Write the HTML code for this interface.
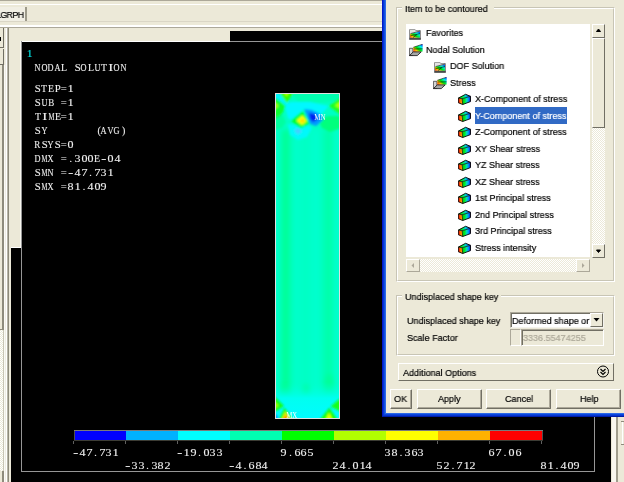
<!DOCTYPE html>
<html><head><meta charset="utf-8">
<style>
*{margin:0;padding:0;box-sizing:border-box}
html,body{width:624px;height:482px;overflow:hidden;background:#ECE9D8;position:relative;font-family:"Liberation Sans",sans-serif}
.a{position:absolute}
.m{position:absolute;will-change:transform;font-family:"Liberation Mono",monospace;font-size:11px;line-height:11px;color:#E8E8E8;white-space:pre}
.t{position:absolute;will-change:transform;-webkit-text-stroke:0.2px currentColor;font-size:9.5px;line-height:9px;color:#000;white-space:pre;transform:scaleX(0.95);transform-origin:0 0}
.s{position:absolute;will-change:transform;font-family:"Liberation Serif",serif;font-size:10px;line-height:11px;color:#F0F0F0;-webkit-text-stroke:0.1px currentColor}
.s i{position:absolute;width:20px;text-align:center;font-style:normal;white-space:pre}
.s b{font-weight:normal}
</style></head><body>
<!-- top toolbar lines -->
<div class="a" style="left:0;top:0;width:624px;height:1px;background:#ACA899"></div>
<div class="a" style="left:0;top:4px;width:624px;height:1px;background:#FFFFFF"></div>
<div class="a" style="left:0;top:21px;width:624px;height:1px;background:#DAD6C6"></div>
<div class="a" style="left:0;top:25px;width:624px;height:2px;background:#FFFFFF"></div>
<div class="a" style="left:0;top:27px;width:624px;height:1px;background:#ACA899"></div>
<!-- tab -->
<div class="a" style="left:0;top:7px;width:25px;height:14px;background:#F1EFE4"></div>
<div class="a" style="left:25px;top:7px;width:2px;height:14px;background:#9D9A8A"></div>
<div class="t" style="left:-4px;top:10px;font-size:9.5px;color:#000;letter-spacing:-0.8px">LGRPH</div>

<!-- black graphics window -->
<div class="a" style="left:11px;top:31px;width:600px;height:451px;background:#000"></div>
<!-- beige overlay panels -->
<div class="a" style="left:0;top:28px;width:230px;height:13px;background:#ECE9D8"></div>
<div class="a" style="left:0;top:28px;width:21px;height:220px;background:#ECE9D8"></div>
<div class="a" style="left:22px;top:41px;width:208px;height:1px;background:#FFFFFF"></div>
<div class="a" style="left:20px;top:41px;width:1px;height:207px;background:#F8F7F0"></div>
<div class="a" style="left:11px;top:247px;width:10px;height:1px;background:#FFFFFF"></div>
<!-- left strip -->
<div class="a" style="left:2px;top:65px;width:2px;height:265px;background:#8E8B7C"></div>
<div class="a" style="left:0;top:329px;width:3px;height:1px;background:#8E8B7C"></div>
<div class="a" style="left:0;top:330px;width:4px;height:141px;background:#F4F3EE;background-image:repeating-conic-gradient(#FFFFFF 0 25%,#ECE9D8 0 50%);background-size:2px 2px"></div>
<div class="a" style="left:3px;top:330px;width:1px;height:141px;background:#C8C5B5"></div>
<div class="a" style="left:0;top:471px;width:2px;height:11px;background:#ECE9D8"></div>
<div class="a" style="left:2px;top:471px;width:2px;height:11px;background:#8E8B7C"></div>
<div class="a" style="left:4px;top:65px;width:1px;height:417px;background:#FBFAF5"></div>
<div class="a" style="left:5px;top:28px;width:1px;height:454px;background:#F0EEE4"></div>
<div class="a" style="left:6px;top:28px;width:1px;height:454px;background:#FFFFFF"></div>
<div class="a" style="left:7px;top:28px;width:1px;height:454px;background:#B8B5A6"></div>
<div class="a" style="left:8px;top:28px;width:1px;height:454px;background:#8E8B7C"></div>
<div class="a" style="left:0;top:28px;width:4px;height:20px;background:#ECE9D8;border-right:1px solid #716F64;border-bottom:1px solid #716F64"></div>
<div class="a" style="left:0;top:49px;width:4px;height:16px;background:#ECE9D8;border-right:1px solid #716F64;border-bottom:1px solid #716F64"></div>
<div class="a" style="left:0;top:37px;width:1px;height:4px;background:#000"></div>

<!-- frame lines -->
<div class="a" style="left:21px;top:41px;width:1px;height:431px;background:#969696"></div>
<div class="a" style="left:21px;top:471px;width:574px;height:1px;background:#969696"></div>
<div class="a" style="left:594px;top:41px;width:1px;height:431px;background:#969696"></div>
<div class="a" style="left:230px;top:41px;width:365px;height:1px;background:#969696"></div>

<!-- right lower strip -->
<div class="a" style="left:611px;top:417px;width:13px;height:65px;background:#ECE9D8"></div>
<div class="a" style="left:612px;top:417px;width:4px;height:65px;background:#F8F6EE"></div>
<div class="a" style="left:616px;top:417px;width:2px;height:65px;background:#A09D8D"></div>
<div class="a" style="left:621px;top:421px;width:3px;height:1px;background:#8E8B7C"></div>
<div class="a" style="left:621px;top:444px;width:3px;height:1px;background:#8E8B7C"></div>
<div class="a" style="left:622px;top:422px;width:1px;height:22px;background:#FFFFFF"></div>

<!-- ANSYS text -->
<div class="s" style="left:0;top:0;color:#00E0E0"><i style="left:19.8px;top:48px"><b style="display:inline-block;transform:scaleX(1.25)">1</b></i></div>
<div class="s" style="left:0;top:0"><i style="left:27.8px;top:62px"><b style="display:inline-block;transform:scaleX(0.83)">N</b></i><i style="left:34.4px;top:62px"><b style="display:inline-block;transform:scaleX(0.83)">O</b></i><i style="left:41.0px;top:62px"><b style="display:inline-block;transform:scaleX(0.83)">D</b></i><i style="left:47.6px;top:62px"><b style="display:inline-block;transform:scaleX(0.83)">A</b></i><i style="left:54.2px;top:62px"><b style="display:inline-block;transform:scaleX(0.98)">L</b></i><i style="left:67.4px;top:62px"><b style="display:inline-block;transform:scaleX(1.08)">S</b></i><i style="left:74.0px;top:62px"><b style="display:inline-block;transform:scaleX(0.83)">O</b></i><i style="left:80.6px;top:62px"><b style="display:inline-block;transform:scaleX(0.98)">L</b></i><i style="left:87.2px;top:62px"><b style="display:inline-block;transform:scaleX(0.83)">U</b></i><i style="left:93.8px;top:62px"><b style="display:inline-block;transform:scaleX(0.98)">T</b></i><i style="left:100.4px;top:62px"><b style="display:inline-block;transform:scaleX(1.5)">I</b></i><i style="left:107.0px;top:62px"><b style="display:inline-block;transform:scaleX(0.83)">O</b></i><i style="left:113.6px;top:62px"><b style="display:inline-block;transform:scaleX(0.83)">N</b></i></div>
<div class="s" style="left:0;top:0"><i style="left:27.8px;top:83px"><b style="display:inline-block;transform:scaleX(1.08)">S</b></i><i style="left:34.4px;top:83px"><b style="display:inline-block;transform:scaleX(0.98)">T</b></i><i style="left:41.0px;top:83px"><b style="display:inline-block;transform:scaleX(0.98)">E</b></i><i style="left:47.6px;top:83px"><b style="display:inline-block;transform:scaleX(1.08)">P</b></i><i style="left:54.2px;top:83px"><b style="display:inline-block;transform:scaleX(1.06)">=</b></i><i style="left:60.8px;top:83px"><b style="display:inline-block;transform:scaleX(1.25)">1</b></i></div>
<div class="s" style="left:0;top:0"><i style="left:27.8px;top:97px"><b style="display:inline-block;transform:scaleX(1.08)">S</b></i><i style="left:34.4px;top:97px"><b style="display:inline-block;transform:scaleX(0.83)">U</b></i><i style="left:41.0px;top:97px"><b style="display:inline-block;transform:scaleX(0.90)">B</b></i><i style="left:54.2px;top:97px"><b style="display:inline-block;transform:scaleX(1.06)">=</b></i><i style="left:60.8px;top:97px"><b style="display:inline-block;transform:scaleX(1.25)">1</b></i></div>
<div class="s" style="left:0;top:0"><i style="left:27.8px;top:111px"><b style="display:inline-block;transform:scaleX(0.98)">T</b></i><i style="left:34.4px;top:111px"><b style="display:inline-block;transform:scaleX(1.5)">I</b></i><i style="left:41.0px;top:111px"><b style="display:inline-block;transform:scaleX(0.67)">M</b></i><i style="left:47.6px;top:111px"><b style="display:inline-block;transform:scaleX(0.98)">E</b></i><i style="left:54.2px;top:111px"><b style="display:inline-block;transform:scaleX(1.06)">=</b></i><i style="left:60.8px;top:111px"><b style="display:inline-block;transform:scaleX(1.25)">1</b></i></div>
<div class="s" style="left:0;top:0"><i style="left:27.8px;top:125px"><b style="display:inline-block;transform:scaleX(1.08)">S</b></i><i style="left:34.4px;top:125px"><b style="display:inline-block;transform:scaleX(0.83)">Y</b></i><i style="left:89.2px;top:125px"><b style="display:inline-block">(</b></i><i style="left:93.8px;top:125px"><b style="display:inline-block;transform:scaleX(0.83)">A</b></i><i style="left:100.4px;top:125px"><b style="display:inline-block;transform:scaleX(0.83)">V</b></i><i style="left:107.0px;top:125px"><b style="display:inline-block;transform:scaleX(0.83)">G</b></i><i style="left:113.6px;top:125px"><b style="display:inline-block">)</b></i></div>
<div class="s" style="left:0;top:0"><i style="left:27.8px;top:139px"><b style="display:inline-block;transform:scaleX(0.90)">R</b></i><i style="left:34.4px;top:139px"><b style="display:inline-block;transform:scaleX(1.08)">S</b></i><i style="left:41.0px;top:139px"><b style="display:inline-block;transform:scaleX(0.83)">Y</b></i><i style="left:47.6px;top:139px"><b style="display:inline-block;transform:scaleX(1.08)">S</b></i><i style="left:54.2px;top:139px"><b style="display:inline-block;transform:scaleX(1.06)">=</b></i><i style="left:60.8px;top:139px"><b style="display:inline-block;transform:scaleX(1.20)">0</b></i></div>
<div class="s" style="left:0;top:0"><i style="left:27.8px;top:153px"><b style="display:inline-block;transform:scaleX(0.83)">D</b></i><i style="left:34.4px;top:153px"><b style="display:inline-block;transform:scaleX(0.67)">M</b></i><i style="left:41.0px;top:153px"><b style="display:inline-block;transform:scaleX(0.83)">X</b></i><i style="left:54.2px;top:153px"><b style="display:inline-block;transform:scaleX(1.06)">=</b></i><i style="left:60.8px;top:153px"><b style="display:inline-block">.</b></i><i style="left:67.4px;top:153px"><b style="display:inline-block;transform:scaleX(1.20)">3</b></i><i style="left:74.0px;top:153px"><b style="display:inline-block;transform:scaleX(1.20)">0</b></i><i style="left:80.6px;top:153px"><b style="display:inline-block;transform:scaleX(1.20)">0</b></i><i style="left:87.2px;top:153px"><b style="display:inline-block;transform:scaleX(0.98)">E</b></i><i style="left:93.8px;top:153px"><b style="display:inline-block;transform:scaleX(1.50)">-</b></i><i style="left:100.4px;top:153px"><b style="display:inline-block;transform:scaleX(1.20)">0</b></i><i style="left:107.0px;top:153px"><b style="display:inline-block;transform:scaleX(1.20)">4</b></i></div>
<div class="s" style="left:0;top:0"><i style="left:27.8px;top:167px"><b style="display:inline-block;transform:scaleX(1.08)">S</b></i><i style="left:34.4px;top:167px"><b style="display:inline-block;transform:scaleX(0.67)">M</b></i><i style="left:41.0px;top:167px"><b style="display:inline-block;transform:scaleX(0.83)">N</b></i><i style="left:54.2px;top:167px"><b style="display:inline-block;transform:scaleX(1.06)">=</b></i><i style="left:60.8px;top:167px"><b style="display:inline-block;transform:scaleX(1.50)">-</b></i><i style="left:67.4px;top:167px"><b style="display:inline-block;transform:scaleX(1.20)">4</b></i><i style="left:74.0px;top:167px"><b style="display:inline-block;transform:scaleX(1.20)">7</b></i><i style="left:80.6px;top:167px"><b style="display:inline-block">.</b></i><i style="left:87.2px;top:167px"><b style="display:inline-block;transform:scaleX(1.20)">7</b></i><i style="left:93.8px;top:167px"><b style="display:inline-block;transform:scaleX(1.20)">3</b></i><i style="left:100.4px;top:167px"><b style="display:inline-block;transform:scaleX(1.25)">1</b></i></div>
<div class="s" style="left:0;top:0"><i style="left:27.8px;top:181px"><b style="display:inline-block;transform:scaleX(1.08)">S</b></i><i style="left:34.4px;top:181px"><b style="display:inline-block;transform:scaleX(0.67)">M</b></i><i style="left:41.0px;top:181px"><b style="display:inline-block;transform:scaleX(0.83)">X</b></i><i style="left:54.2px;top:181px"><b style="display:inline-block;transform:scaleX(1.06)">=</b></i><i style="left:60.8px;top:181px"><b style="display:inline-block;transform:scaleX(1.20)">8</b></i><i style="left:67.4px;top:181px"><b style="display:inline-block;transform:scaleX(1.25)">1</b></i><i style="left:74.0px;top:181px"><b style="display:inline-block">.</b></i><i style="left:80.6px;top:181px"><b style="display:inline-block;transform:scaleX(1.20)">4</b></i><i style="left:87.2px;top:181px"><b style="display:inline-block;transform:scaleX(1.20)">0</b></i><i style="left:93.8px;top:181px"><b style="display:inline-block;transform:scaleX(1.20)">9</b></i></div>

<!-- contour plot -->
<div class="a" style="left:275px;top:93px;width:65px;height:326px;background:#E0E0E0"></div>
<svg class="a" style="left:276px;top:94px" width="63" height="324" viewBox="0 0 63 324">
<defs>
<filter id="bl" x="-20%" y="-20%" width="140%" height="140%"><feGaussianBlur stdDeviation="1.1"/></filter>
<filter id="bl2" x="-50%" y="-10%" width="200%" height="120%"><feGaussianBlur stdDeviation="2.5"/></filter>
<clipPath id="cp"><rect x="0" y="0" width="63" height="324"/></clipPath>
<linearGradient id="vs" x1="0" y1="0" x2="63" y2="0" gradientUnits="userSpaceOnUse">
<stop offset="0" stop-color="#00FFE0"/><stop offset="0.145" stop-color="#00FF8C"/><stop offset="0.29" stop-color="#00FFCC"/><stop offset="0.48" stop-color="#00FFC4"/><stop offset="0.66" stop-color="#00FFD0"/><stop offset="0.84" stop-color="#00FFA4"/><stop offset="1" stop-color="#00FFDC"/></linearGradient>
<linearGradient id="bg1" x1="0" y1="288" x2="0" y2="324" gradientUnits="userSpaceOnUse"><stop offset="0" stop-color="#00FFD0" stop-opacity="0"/><stop offset="0.45" stop-color="#00FFF0"/><stop offset="1" stop-color="#00FCFF"/></linearGradient>
</defs>
<rect x="0" y="0" width="63" height="324" fill="#00FFC4"/>
<g clip-path="url(#cp)">
<rect x="0" y="36" width="63" height="268" fill="url(#vs)" filter="url(#bl2)"/>
<g filter="url(#bl2)">
<ellipse cx="9" cy="296" rx="4" ry="6" fill="#00FF80"/>
<ellipse cx="30" cy="297" rx="4" ry="6" fill="#00FF90"/>
<ellipse cx="53" cy="290" rx="4" ry="10" fill="#00FF98"/>
</g>
<rect x="-2" y="288" width="67" height="38" fill="url(#bg1)"/>
<g filter="url(#bl)">
<polygon points="15,-2 65,-2 65,7 40,9 22,8" fill="#00FFB0"/>
<polygon points="-2,-2 6,-2 10.5,9 16,8 34,8 52.7,12 44,22 36,17 28,15 26.5,17 15,26 12,24 10,16 4,8 -2,3" fill="#00F8FF"/>
<polygon points="12,30 20,31 25,34 33,31 36,34 31,43 22,46 14,41" fill="#00F8FF" opacity="0.9"/>
<polygon points="-2,3 5,8 9.6,12 7,18 3,24 -2,26" fill="#10FF30"/>
<polygon points="-2,24 6,20 10,28 6,34 -2,36" fill="#00FF90" opacity="0.7"/>
<polygon points="-2,8 2.5,11.8 -2,16" fill="#B0FF00"/>
<polygon points="3,-2 18,-2 10.5,9" fill="#30FF00"/>
<polygon points="8,-2 13,-2 10.5,2.5" fill="#C8FF00"/>
<polygon points="65,3 52.7,12 65,21" fill="#20FF20"/>
<polygon points="65,7.5 59,11.5 65,15" fill="#C0FF00"/>
<polygon points="42,26 52,22 65,22 65,34 54,38 46,34" fill="#00FF50" opacity="0.6"/>
<polygon points="15,26.5 26.5,17 33.4,29.8 25,34 18.4,30" fill="#00FF30"/>
<polygon points="20.5,26.6 26.5,21.5 31,27 26,31" fill="#FFFF00"/>
<polygon points="24.5,26.5 26.8,25 28.5,27 26.3,28.5" fill="#FFC800"/>
<polygon points="28,15 36,16 46,21 47,26 40,32 34,30 31,22" fill="#0098FF"/>
<polygon points="33,19 39,20 42,25 37,28 34,25" fill="#0020F0"/>
<polygon points="18,36.5 22,34 26,37 22,40.5" fill="#50C8FF" opacity="0.85"/>
<polygon points="-2,302 8,312 -2,318.5" fill="#18FF18"/>
<polygon points="-2,307.5 2.5,311.4 -2,315" fill="#A8FF00"/>
<polygon points="-2,318 2.5,324 -2,326" fill="#0090FF"/>
<polygon points="8.5,313.7 2.7,326 17.2,326" fill="#18FF10"/>
<polygon points="9.5,317.5 5.5,326 14,326" fill="#FFF000"/>
<polygon points="9.6,320.5 7.5,326 11.8,326" fill="#FF5000"/>
<polygon points="65,303.8 54.6,312.5 65,317.8" fill="#18FF18"/>
<polygon points="53.4,313.7 43.6,326 61.6,326" fill="#18FF10"/>
<polygon points="53,318.5 49.5,326 56.5,326" fill="#E8FF00"/>
</g>
</g>
<text x="38.2" y="25.8" font-family="Liberation Serif" font-size="9" fill="#fff" textLength="11.3" lengthAdjust="spacingAndGlyphs">MN</text>
<text x="10.2" y="324.2" font-family="Liberation Serif" font-size="9" fill="#fff" textLength="11" lengthAdjust="spacingAndGlyphs">MX</text>
</svg>

<!-- colorbar -->
<div class="a" style="left:74px;top:430px;width:469px;height:11px;background:#505050;border-top:1px solid #7A7A7A;border-bottom:1px solid #3C3C34"></div>
<div class="a" style="left:75px;top:431px;width:51px;height:9px;background:#0000FF"></div>
<div class="a" style="left:126px;top:431px;width:52px;height:9px;background:#00B2FF"></div>
<div class="a" style="left:178px;top:431px;width:52px;height:9px;background:#00FFFF"></div>
<div class="a" style="left:230px;top:431px;width:52px;height:9px;background:#00FFB2"></div>
<div class="a" style="left:282px;top:431px;width:52px;height:9px;background:#00FF00"></div>
<div class="a" style="left:334px;top:431px;width:52px;height:9px;background:#B2FF00"></div>
<div class="a" style="left:386px;top:431px;width:52px;height:9px;background:#FFFF00"></div>
<div class="a" style="left:438px;top:431px;width:52px;height:9px;background:#FFB200"></div>
<div class="a" style="left:490px;top:431px;width:52px;height:9px;background:#FF0000"></div>
<div class="a" style="left:73px;top:441px;width:1px;height:3px;background:#606060"></div><div class="a" style="left:125px;top:441px;width:1px;height:3px;background:#606060"></div><div class="a" style="left:177px;top:441px;width:1px;height:3px;background:#606060"></div><div class="a" style="left:229px;top:441px;width:1px;height:3px;background:#606060"></div><div class="a" style="left:281px;top:441px;width:1px;height:3px;background:#606060"></div><div class="a" style="left:333px;top:441px;width:1px;height:3px;background:#606060"></div><div class="a" style="left:385px;top:441px;width:1px;height:3px;background:#606060"></div><div class="a" style="left:437px;top:441px;width:1px;height:3px;background:#606060"></div><div class="a" style="left:489px;top:441px;width:1px;height:3px;background:#606060"></div><div class="a" style="left:541px;top:441px;width:1px;height:3px;background:#606060"></div>
<div class="s" style="left:0;top:0"><i style="left:65.8px;top:447px"><b style="display:inline-block;transform:scaleX(1.50)">-</b></i><i style="left:72.4px;top:447px"><b style="display:inline-block;transform:scaleX(1.20)">4</b></i><i style="left:79.0px;top:447px"><b style="display:inline-block;transform:scaleX(1.20)">7</b></i><i style="left:85.6px;top:447px"><b style="display:inline-block">.</b></i><i style="left:92.2px;top:447px"><b style="display:inline-block;transform:scaleX(1.20)">7</b></i><i style="left:98.8px;top:447px"><b style="display:inline-block;transform:scaleX(1.20)">3</b></i><i style="left:105.4px;top:447px"><b style="display:inline-block;transform:scaleX(1.25)">1</b></i></div>
<div class="s" style="left:0;top:0"><i style="left:117.8px;top:460px"><b style="display:inline-block;transform:scaleX(1.50)">-</b></i><i style="left:124.4px;top:460px"><b style="display:inline-block;transform:scaleX(1.20)">3</b></i><i style="left:131.0px;top:460px"><b style="display:inline-block;transform:scaleX(1.20)">3</b></i><i style="left:137.6px;top:460px"><b style="display:inline-block">.</b></i><i style="left:144.2px;top:460px"><b style="display:inline-block;transform:scaleX(1.20)">3</b></i><i style="left:150.8px;top:460px"><b style="display:inline-block;transform:scaleX(1.20)">8</b></i><i style="left:157.4px;top:460px"><b style="display:inline-block;transform:scaleX(1.20)">2</b></i></div>
<div class="s" style="left:0;top:0"><i style="left:169.8px;top:447px"><b style="display:inline-block;transform:scaleX(1.50)">-</b></i><i style="left:176.4px;top:447px"><b style="display:inline-block;transform:scaleX(1.25)">1</b></i><i style="left:183.0px;top:447px"><b style="display:inline-block;transform:scaleX(1.20)">9</b></i><i style="left:189.6px;top:447px"><b style="display:inline-block">.</b></i><i style="left:196.2px;top:447px"><b style="display:inline-block;transform:scaleX(1.20)">0</b></i><i style="left:202.8px;top:447px"><b style="display:inline-block;transform:scaleX(1.20)">3</b></i><i style="left:209.4px;top:447px"><b style="display:inline-block;transform:scaleX(1.20)">3</b></i></div>
<div class="s" style="left:0;top:0"><i style="left:221.8px;top:460px"><b style="display:inline-block;transform:scaleX(1.50)">-</b></i><i style="left:228.4px;top:460px"><b style="display:inline-block;transform:scaleX(1.20)">4</b></i><i style="left:235.0px;top:460px"><b style="display:inline-block">.</b></i><i style="left:241.6px;top:460px"><b style="display:inline-block;transform:scaleX(1.20)">6</b></i><i style="left:248.2px;top:460px"><b style="display:inline-block;transform:scaleX(1.20)">8</b></i><i style="left:254.8px;top:460px"><b style="display:inline-block;transform:scaleX(1.20)">4</b></i></div>
<div class="s" style="left:0;top:0"><i style="left:273.8px;top:447px"><b style="display:inline-block;transform:scaleX(1.20)">9</b></i><i style="left:280.4px;top:447px"><b style="display:inline-block">.</b></i><i style="left:287.0px;top:447px"><b style="display:inline-block;transform:scaleX(1.20)">6</b></i><i style="left:293.6px;top:447px"><b style="display:inline-block;transform:scaleX(1.20)">6</b></i><i style="left:300.2px;top:447px"><b style="display:inline-block;transform:scaleX(1.20)">5</b></i></div>
<div class="s" style="left:0;top:0"><i style="left:325.8px;top:460px"><b style="display:inline-block;transform:scaleX(1.20)">2</b></i><i style="left:332.4px;top:460px"><b style="display:inline-block;transform:scaleX(1.20)">4</b></i><i style="left:339.0px;top:460px"><b style="display:inline-block">.</b></i><i style="left:345.6px;top:460px"><b style="display:inline-block;transform:scaleX(1.20)">0</b></i><i style="left:352.2px;top:460px"><b style="display:inline-block;transform:scaleX(1.25)">1</b></i><i style="left:358.8px;top:460px"><b style="display:inline-block;transform:scaleX(1.20)">4</b></i></div>
<div class="s" style="left:0;top:0"><i style="left:377.8px;top:447px"><b style="display:inline-block;transform:scaleX(1.20)">3</b></i><i style="left:384.4px;top:447px"><b style="display:inline-block;transform:scaleX(1.20)">8</b></i><i style="left:391.0px;top:447px"><b style="display:inline-block">.</b></i><i style="left:397.6px;top:447px"><b style="display:inline-block;transform:scaleX(1.20)">3</b></i><i style="left:404.2px;top:447px"><b style="display:inline-block;transform:scaleX(1.20)">6</b></i><i style="left:410.8px;top:447px"><b style="display:inline-block;transform:scaleX(1.20)">3</b></i></div>
<div class="s" style="left:0;top:0"><i style="left:429.8px;top:460px"><b style="display:inline-block;transform:scaleX(1.20)">5</b></i><i style="left:436.4px;top:460px"><b style="display:inline-block;transform:scaleX(1.20)">2</b></i><i style="left:443.0px;top:460px"><b style="display:inline-block">.</b></i><i style="left:449.6px;top:460px"><b style="display:inline-block;transform:scaleX(1.20)">7</b></i><i style="left:456.2px;top:460px"><b style="display:inline-block;transform:scaleX(1.25)">1</b></i><i style="left:462.8px;top:460px"><b style="display:inline-block;transform:scaleX(1.20)">2</b></i></div>
<div class="s" style="left:0;top:0"><i style="left:481.8px;top:447px"><b style="display:inline-block;transform:scaleX(1.20)">6</b></i><i style="left:488.4px;top:447px"><b style="display:inline-block;transform:scaleX(1.20)">7</b></i><i style="left:495.0px;top:447px"><b style="display:inline-block">.</b></i><i style="left:501.6px;top:447px"><b style="display:inline-block;transform:scaleX(1.20)">0</b></i><i style="left:508.2px;top:447px"><b style="display:inline-block;transform:scaleX(1.20)">6</b></i></div>
<div class="s" style="left:0;top:0"><i style="left:533.8px;top:460px"><b style="display:inline-block;transform:scaleX(1.20)">8</b></i><i style="left:540.4px;top:460px"><b style="display:inline-block;transform:scaleX(1.25)">1</b></i><i style="left:547.0px;top:460px"><b style="display:inline-block">.</b></i><i style="left:553.6px;top:460px"><b style="display:inline-block;transform:scaleX(1.20)">4</b></i><i style="left:560.2px;top:460px"><b style="display:inline-block;transform:scaleX(1.20)">0</b></i><i style="left:566.8px;top:460px"><b style="display:inline-block;transform:scaleX(1.20)">9</b></i></div>

<svg width="0" height="0" style="position:absolute"><defs>
<linearGradient id="rbf" x1="0" y1="1" x2="1" y2="0"><stop offset="0" stop-color="#FF2000"/><stop offset="0.22" stop-color="#FFC000"/><stop offset="0.42" stop-color="#00E000"/><stop offset="0.7" stop-color="#00F0E0"/><stop offset="1" stop-color="#0010FF"/></linearGradient>
<linearGradient id="rbo" x1="0" y1="1" x2="1" y2="0"><stop offset="0" stop-color="#FF2000"/><stop offset="0.25" stop-color="#FFC000"/><stop offset="0.45" stop-color="#00E000"/><stop offset="0.75" stop-color="#00F0F0"/><stop offset="1" stop-color="#0000FF"/></linearGradient>
<linearGradient id="cfr" x1="0" y1="0" x2="1" y2="0"><stop offset="0" stop-color="#E80000"/><stop offset="0.5" stop-color="#FF7000"/><stop offset="1" stop-color="#FFD800"/></linearGradient>
<linearGradient id="csd" x1="0" y1="0" x2="1" y2="0"><stop offset="0" stop-color="#00C000"/><stop offset="0.3" stop-color="#00E820"/><stop offset="0.55" stop-color="#00E0C0"/><stop offset="0.78" stop-color="#0088FF"/><stop offset="1" stop-color="#1000D0"/></linearGradient>
<g id="ic_fold"><path d="M0.5,10.5 V0.8 Q0.5,0.3 1,0.3 H5.8 L6.8,1.6 H11.5 V10.5 Z" fill="#E4E4E4" stroke="#858585" stroke-width="0.9"/><polygon points="1,5.1 11,2.4 11,8.8 1,8.8" fill="url(#rbf)"/><path d="M1.5,4.6 L11,2 M1.3,6.8 L11,4.6 M4,8.6 L8,5.5" stroke="#000" stroke-width="0.7" opacity="0.8"/><rect x="0.5" y="8.8" width="11.2" height="1.8" fill="#4A4A4A"/></g>
<g id="ic_open"><polygon points="0.4,4.3 3.9,4.3 3.9,11.4 0.4,11.4" fill="#D4D4D4" stroke="#404040" stroke-width="0.8"/><polygon points="4.3,3.3 13.6,0.2 13.6,7.6 4.3,7.8" fill="url(#rbo)"/><path d="M4.3,3.3 L13.6,0.2 M4.5,5 L13.6,4.8" stroke="#000" stroke-width="0.7" opacity="0.8"/><polygon points="0.4,11.6 4.3,7.9 12.2,7.9 8.3,11.6" fill="#A6A6A6" stroke="#101010" stroke-width="0.8"/></g>
<g id="ic_cube"><polygon points="0.3,5.1 4.1,5.7 4.7,11.5 0.3,9.7" fill="url(#cfr)"/><polygon points="0.3,5.1 7.6,1.3 12.5,3.3 4.1,5.7" fill="url(#csd)"/><polygon points="4.1,5.7 12.5,3.3 12.5,8.6 4.7,11.5" fill="url(#csd)"/><polygon points="0.3,5.1 7.6,1.3 12.5,3.3 12.5,8.6 4.7,11.5 0.3,9.7" fill="none" stroke="#000" stroke-width="0.9" stroke-linejoin="round"/><path d="M0.3,5.1 L4.1,5.7 L12.5,3.3 M4.1,5.7 L4.7,11.5" fill="none" stroke="#000" stroke-width="0.7"/></g>
</defs></svg>
<!-- DIALOG -->
<div class="a" style="left:382px;top:0;width:242px;height:417px;background:#ECE9D8"></div>
<div class="a" style="left:382px;top:0;width:1px;height:417px;background:#0018C8"></div>
<div class="a" style="left:383px;top:0;width:1px;height:416px;background:#0535D8"></div>
<div class="a" style="left:384px;top:0;width:1px;height:415px;background:#1050E0"></div>
<div class="a" style="left:385px;top:0;width:1px;height:414px;background:#2C68E8"></div>
<div class="a" style="left:385px;top:413px;width:239px;height:1px;background:#2C68E8"></div>
<div class="a" style="left:384px;top:414px;width:240px;height:1px;background:#0A46DD"></div>
<div class="a" style="left:383px;top:415px;width:241px;height:1px;background:#0535D0"></div>
<div class="a" style="left:382px;top:416px;width:242px;height:1px;background:#001CA8"></div>

<!-- group 1 -->
<div class="a" style="left:396px;top:7px;width:219px;height:275px;border:1px solid #C8C5B5;border-right-color:#FFFFFF;border-bottom-color:#FFFFFF"></div>
<div class="a" style="left:397px;top:8px;width:217px;height:273px;border:1px solid #FFFFFF;border-right-color:#C8C5B5;border-bottom-color:#C8C5B5"></div>
<div class="a" style="left:402px;top:2px;width:92px;height:12px;background:#ECE9D8"></div>
<div class="t" style="left:405px;top:4px">Item to be contoured</div>

<!-- list -->
<div class="a" style="left:406px;top:24px;width:184px;height:233px;background:#FFFFFF"></div>
<div class="a" style="left:475px;top:107px;width:92px;height:17px;background:#316AC5"></div>

<!-- v scrollbar -->
<div class="a" style="left:592px;top:24px;width:13px;height:233px;background:#F4F3EE;background-image:repeating-conic-gradient(#FFFFFF 0 25%,#ECE9D8 0 50%);background-size:2px 2px"></div>
<div class="a" style="left:592px;top:24px;width:13px;height:14px;background:#ECE9D8;border-left:1px solid #FFF;border-top:1px solid #FFF;border-right:1px solid #716F64;border-bottom:1px solid #716F64"></div>
<div class="a" style="left:592px;top:38px;width:13px;height:90px;background:#ECE9D8;border-left:1px solid #FFF;border-top:1px solid #FFF;border-right:1px solid #716F64;border-bottom:1px solid #716F64"></div>
<div class="a" style="left:592px;top:244px;width:13px;height:14px;background:#ECE9D8;border-left:1px solid #FFF;border-top:1px solid #FFF;border-right:1px solid #716F64;border-bottom:1px solid #716F64"></div>
<svg class="a" style="left:592px;top:24px" width="13" height="234"><polygon points="4.5,7.5 6.5,5 8.5,7.5" fill="#000" stroke="#000" stroke-width="1"/><polygon points="4.5,226 6.5,228.5 8.5,226" fill="#000" stroke="#000" stroke-width="1"/></svg>

<!-- h scrollbar -->
<div class="a" style="left:406px;top:259px;width:184px;height:13px;background:#F4F3EE;background-image:repeating-conic-gradient(#FFFFFF 0 25%,#ECE9D8 0 50%);background-size:2px 2px"></div>
<div class="a" style="left:406px;top:259px;width:14px;height:13px;background:#ECE9D8;border-left:1px solid #FFF;border-top:1px solid #FFF;border-right:1px solid #ACA899;border-bottom:1px solid #ACA899"></div>
<div class="a" style="left:576px;top:259px;width:14px;height:13px;background:#ECE9D8;border-left:1px solid #FFF;border-top:1px solid #FFF;border-right:1px solid #ACA899;border-bottom:1px solid #ACA899"></div>
<svg class="a" style="left:406px;top:259px" width="184" height="13"><polygon points="8,4 5.5,6.5 8,9" fill="#ACA899"/><polygon points="176,4 178.5,6.5 176,9" fill="#ACA899"/></svg>

<!-- group 2 -->
<div class="a" style="left:396px;top:295px;width:219px;height:61px;border:1px solid #C8C5B5;border-right-color:#FFFFFF;border-bottom-color:#FFFFFF"></div>
<div class="a" style="left:397px;top:296px;width:217px;height:59px;border:1px solid #FFFFFF;border-right-color:#C8C5B5;border-bottom-color:#C8C5B5"></div>
<div class="a" style="left:402px;top:289px;width:99px;height:12px;background:#ECE9D8"></div>
<div class="t" style="left:405px;top:291.5px">Undisplaced shape key</div>
<div class="t" style="left:407px;top:316px">Undisplaced shape key</div>
<div class="t" style="left:407px;top:333px">Scale Factor</div>
<!-- combo -->
<div class="a" style="left:510px;top:312px;width:94px;height:16px;background:#FFF;border-left:1px solid #ACA899;border-top:1px solid #ACA899;border-right:1px solid #F4F3EE;border-bottom:1px solid #F4F3EE"></div>
<div class="a" style="left:511px;top:313px;width:92px;height:14px;border-left:1px solid #716F64;border-top:1px solid #716F64"></div>
<div class="t" style="left:512px;top:315.5px">Deformed shape or</div>
<div class="a" style="left:590px;top:313px;width:13px;height:14px;background:#ECE9D8;border-left:1px solid #FFF;border-top:1px solid #FFF;border-right:1px solid #716F64;border-bottom:1px solid #716F64"></div>
<svg class="a" style="left:590px;top:313px" width="13" height="14"><polygon points="3.5,5 9.5,5 6.5,8.5" fill="#000"/></svg>
<!-- disabled -->
<div class="a" style="left:510px;top:329px;width:11px;height:17px;border-left:1px solid #ACA899;border-top:1px solid #ACA899;border-right:1px solid #FFF;border-bottom:1px solid #FFF"></div>
<div class="a" style="left:521px;top:329px;width:83px;height:17px;border-left:1px solid #ACA899;border-top:1px solid #ACA899;border-right:1px solid #FFF;border-bottom:1px solid #FFF"></div>
<div class="a" style="left:522px;top:330px;width:81px;height:15px;border-left:1px solid #716F64;border-top:1px solid #716F64"></div>
<div class="t" style="left:523px;top:333px;color:#ACA899">3336.55474255</div>

<!-- additional options -->
<div class="a" style="left:398px;top:363px;width:216px;height:18px;background:#ECE9D8;border-left:1px solid #FFF;border-top:1px solid #FFF;border-right:1px solid #716F64;border-bottom:1px solid #716F64"></div>
<div class="t" style="left:403px;top:368px">Additional Options</div>
<svg class="a" style="left:596px;top:365px" width="14" height="14"><circle cx="7" cy="6.5" r="5.5" fill="none" stroke="#000" stroke-width="1"/><polyline points="4.5,4 7,6.5 9.5,4" fill="none" stroke="#000" stroke-width="1.2"/><polyline points="4.5,7 7,9.5 9.5,7" fill="none" stroke="#000" stroke-width="1.2"/></svg>

<!-- buttons -->
<div class="a" style="left:390px;top:389px;width:22px;height:20px;background:#ECE9D8;border-left:1px solid #FFF;border-top:1px solid #FFF;border-right:1px solid #716F64;border-bottom:1px solid #716F64;box-shadow:inset -1px -1px #ACA899;border-radius:1px"></div>
<div class="a" style="left:417px;top:389px;width:65px;height:20px;background:#ECE9D8;border-left:1px solid #FFF;border-top:1px solid #FFF;border-right:1px solid #716F64;border-bottom:1px solid #716F64;box-shadow:inset -1px -1px #ACA899;border-radius:1px"></div>
<div class="a" style="left:486px;top:389px;width:65px;height:20px;background:#ECE9D8;border-left:1px solid #FFF;border-top:1px solid #FFF;border-right:1px solid #716F64;border-bottom:1px solid #716F64;box-shadow:inset -1px -1px #ACA899;border-radius:1px"></div>
<div class="a" style="left:556px;top:389px;width:65px;height:20px;background:#ECE9D8;border-left:1px solid #FFF;border-top:1px solid #FFF;border-right:1px solid #716F64;border-bottom:1px solid #716F64;box-shadow:inset -1px -1px #ACA899;border-radius:1px"></div>
<div class="t" style="left:394px;top:393.5px">OK</div>
<div class="t" style="left:438px;top:393.5px">Apply</div>
<div class="t" style="left:504.5px;top:393.5px">Cancel</div>
<div class="t" style="left:579.5px;top:393.5px">Help</div>
<div class="t" style="left:425.5px;top:28.3px;color:#000">Favorites</div>
<svg class="a" style="left:409.0px;top:29.2px" width="14" height="13"><use href="#ic_fold"/></svg>
<div class="t" style="left:425.5px;top:44.8px;color:#000">Nodal Solution</div>
<svg class="a" style="left:408.7px;top:44.3px" width="14" height="13"><use href="#ic_open"/></svg>
<div class="t" style="left:450.2px;top:61.3px;color:#000">DOF Solution</div>
<svg class="a" style="left:433.7px;top:62.2px" width="14" height="13"><use href="#ic_fold"/></svg>
<div class="t" style="left:450.2px;top:77.8px;color:#000">Stress</div>
<svg class="a" style="left:433.4px;top:77.3px" width="14" height="13"><use href="#ic_open"/></svg>
<div class="t" style="left:474.9px;top:94.3px;color:#000">X-Component of stress</div>
<svg class="a" style="left:458.0px;top:93.0px" width="14" height="13"><use href="#ic_cube"/></svg>
<div class="t" style="left:474.9px;top:110.8px;color:#FFF">Y-Component of stress</div>
<svg class="a" style="left:458.0px;top:109.5px" width="14" height="13"><use href="#ic_cube"/></svg>
<div class="t" style="left:474.9px;top:127.3px;color:#000">Z-Component of stress</div>
<svg class="a" style="left:458.0px;top:126.0px" width="14" height="13"><use href="#ic_cube"/></svg>
<div class="t" style="left:474.9px;top:143.8px;color:#000">XY Shear stress</div>
<svg class="a" style="left:458.0px;top:142.5px" width="14" height="13"><use href="#ic_cube"/></svg>
<div class="t" style="left:474.9px;top:160.3px;color:#000">YZ Shear stress</div>
<svg class="a" style="left:458.0px;top:159.0px" width="14" height="13"><use href="#ic_cube"/></svg>
<div class="t" style="left:474.9px;top:176.8px;color:#000">XZ Shear stress</div>
<svg class="a" style="left:458.0px;top:175.5px" width="14" height="13"><use href="#ic_cube"/></svg>
<div class="t" style="left:474.9px;top:193.3px;color:#000">1st Principal stress</div>
<svg class="a" style="left:458.0px;top:192.0px" width="14" height="13"><use href="#ic_cube"/></svg>
<div class="t" style="left:474.9px;top:209.8px;color:#000">2nd Principal stress</div>
<svg class="a" style="left:458.0px;top:208.5px" width="14" height="13"><use href="#ic_cube"/></svg>
<div class="t" style="left:474.9px;top:226.3px;color:#000">3rd Principal stress</div>
<svg class="a" style="left:458.0px;top:225.0px" width="14" height="13"><use href="#ic_cube"/></svg>
<div class="t" style="left:474.9px;top:242.8px;color:#000">Stress intensity</div>
<svg class="a" style="left:458.0px;top:241.5px" width="14" height="13"><use href="#ic_cube"/></svg>

</body></html>
